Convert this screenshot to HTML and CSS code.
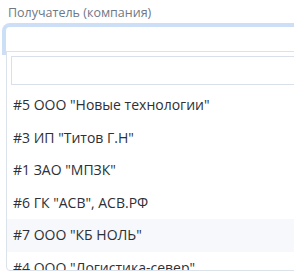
FILE: index.html
```html
<!DOCTYPE html>
<html lang="ru">
<head>
<meta charset="utf-8">
<title>Получатель</title>
<link rel="stylesheet" href="styles.css">
</head>
<body>
<div class="field">
  <label class="label">Получатель (компания)</label>
  <div class="select"></div>
  <div class="dropdown">
    <div class="search"><input class="search-input" type="text"></div>
    <ul class="results">
      <li class="option">#5 ООО "Новые технологии"</li>
      <li class="option">#3 ИП "Титов Г.Н"</li>
      <li class="option">#1 ЗАО "МПЗК"</li>
      <li class="option">#6 ГК "АСВ", АСВ.РФ</li>
      <li class="option option-hover">#7 ООО "КБ НОЛЬ"</li>
      <li class="option">#4 ООО "Логистика-север"</li>
    </ul>
  </div>
</div>
</body>
</html>
```
FILE: styles.css
```css
html {
  overflow: hidden;
  background: #ffffff;
}
body {
  margin: 0;
  padding: 0;
  font-family: "Open Sans", "Noto Sans", sans-serif;
  color: #2d3036;
}
.field {
  margin-left: 6px;
  width: 380px;
}
.label {
  display: block;
  margin-top: 4px;
  padding-left: 2px;
  font-size: 12.5px;
  line-height: 18px;
  color: #6f7884;
}
.select {
  margin-top: 5px;
  height: 24px;
  background: #ffffff;
  border-radius: 4px 4px 0 0;
  box-shadow: 0 0 0 4px #cddff6;
}
.dropdown {
  height: 220px;
  box-sizing: border-box;
  background: #ffffff;
  border: 1px solid #dbe2ea;
  border-radius: 0 0 4px 4px;
  display: flex;
  flex-direction: column;
}
.search {
  padding: 4px;
}
.search-input {
  display: block;
  box-sizing: border-box;
  width: 100%;
  height: 29px;
  margin: 0;
  border: 1px solid #d9e0e9;
  outline: none;
  background: #ffffff;
}
.results {
  list-style: none;
  margin: 0;
  padding: 0;
  flex: 1;
  overflow: hidden;
}
.option {
  padding: 6px 6px;
  font-size: 14px;
  line-height: 20.5px;
  white-space: nowrap;
}
.option-hover {
  background: #f6f8fb;
}
```
